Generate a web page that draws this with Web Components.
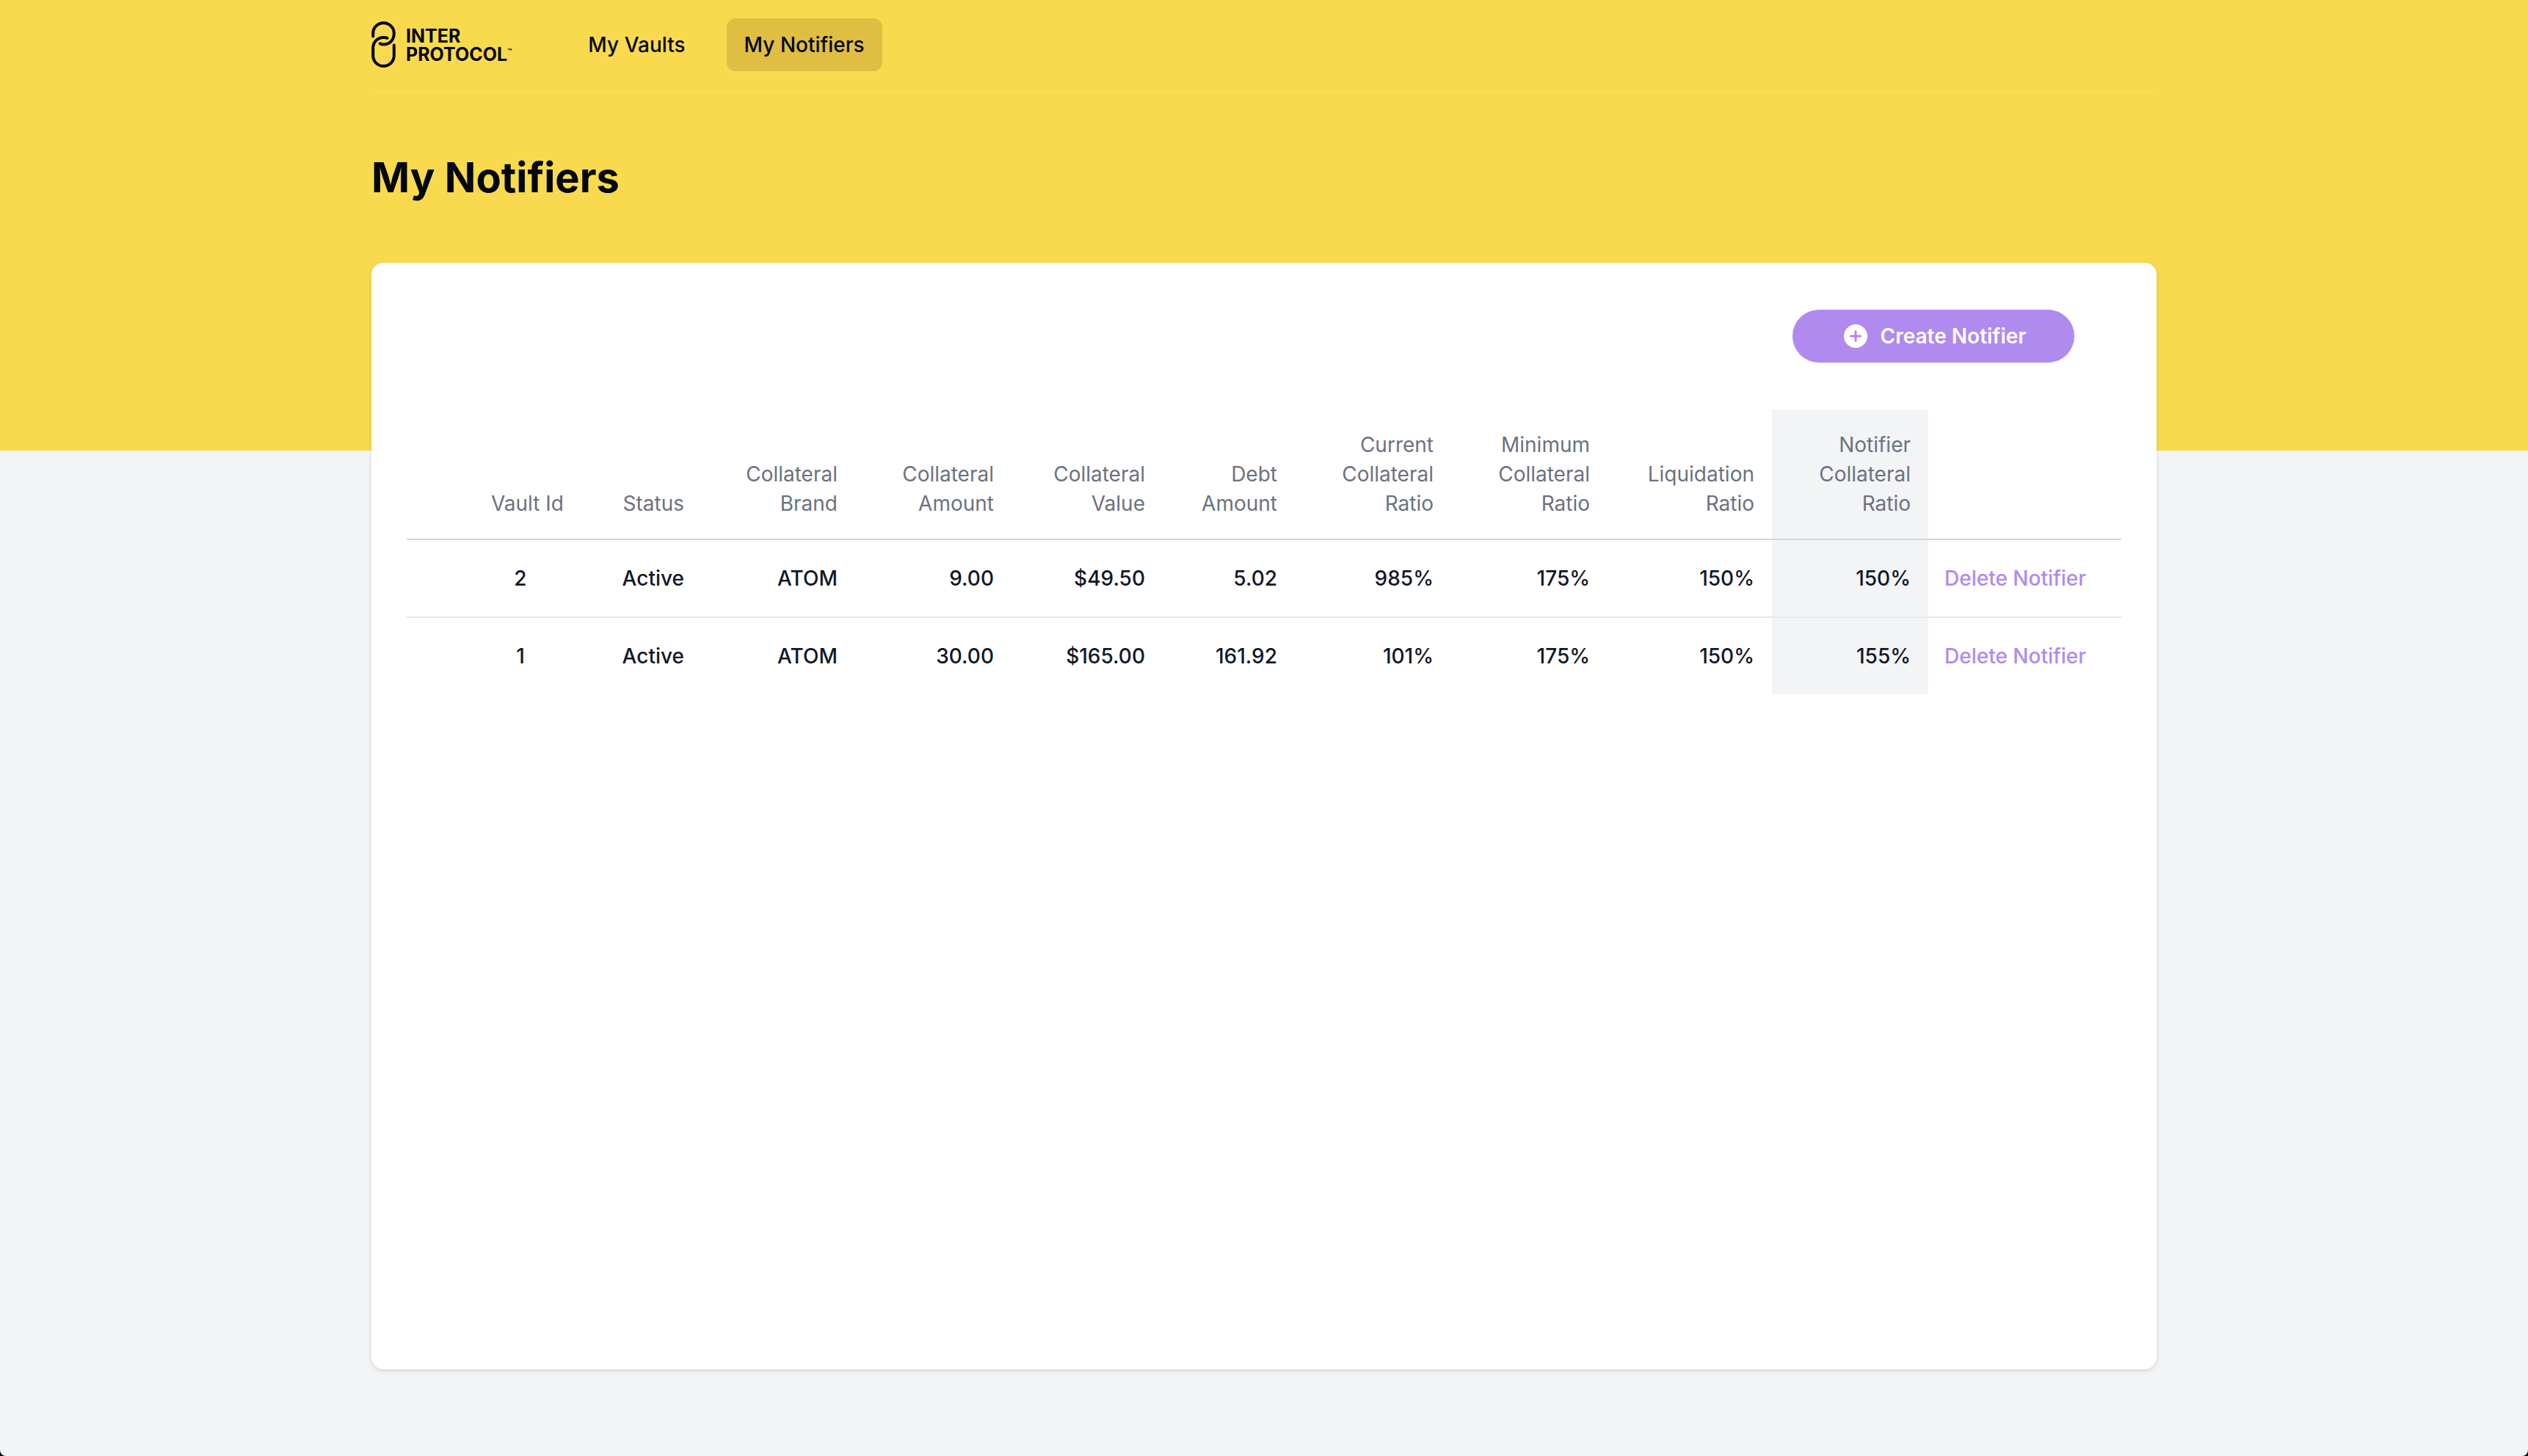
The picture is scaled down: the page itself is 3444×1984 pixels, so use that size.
<!DOCTYPE html>
<html lang="en">
<head>
<meta charset="utf-8">
<title>My Notifiers</title>
<style>
  html { background: #000; }
  body {
    margin: 0;
    font-family: Inter, "Liberation Sans", sans-serif;
    font-size: 28px;
    line-height: 40px;
    color: #111827;
    --yellow: #f9da4e;
    --purple: #b08aee;
    --gutter: 48px;
  }
</style>
</head>
<body>
<app-shell>
  <app-header slot="header">
    <brand-logo slot="logo"></brand-logo>
    <nav-link href="#vaults">My Vaults</nav-link>
    <nav-link href="#notifiers" active>My Notifiers</nav-link>
  </app-header>
  <page-title slot="title">My Notifiers</page-title>
  <content-card>
    <create-button slot="actions">Create Notifier</create-button>
    <notifier-table></notifier-table>
  </content-card>
</app-shell>

<script>
const define = (name, html, setup) => {
  const template = document.createElement('template');
  template.innerHTML = html;
  customElements.define(name, class extends HTMLElement {
    constructor() {
      super();
      this.attachShadow({ mode: 'open' }).append(template.content.cloneNode(true));
    }
    connectedCallback() {
      if (setup) setup(this, this.shadowRoot);
    }
  });
};

define('app-shell', `
  <style>
    :host {
      display: flex; flex-direction: column; min-height: 100vh;
      background: #f3f4f6; border-radius: 0 0 8px 8px; overflow: hidden;
    }
    .hero { background: var(--yellow); padding-bottom: 256px; }
    .wrap { box-sizing: border-box; width: 100%; max-width: 2432px; margin: 0 auto; }
    main { flex: 1; display: flex; margin-top: -256px; padding-bottom: 118px; }
    main .wrap { display: flex; }
    ::slotted(content-card) { flex: 1; }
  </style>
  <div class="hero">
    <div class="wrap"><slot name="header"></slot><slot name="title"></slot></div>
  </div>
  <main><div class="wrap"><slot></slot></div></main>
`);

define('app-header', `
  <style>
    :host { display: block; }
    header {
      display: flex; align-items: center; gap: 80px; height: 122px;
      padding-bottom: 2px; border-bottom: 2px solid #f9dd62;
    }
    nav { display: flex; gap: 32px; }
  </style>
  <header><slot name="logo"></slot><nav aria-label="Main"><slot></slot></nav></header>
`);

define('brand-logo', `
  <style>
    :host { display: block; color: #000; }
    a { display: flex; align-items: center; gap: 14px; color: inherit; text-decoration: none; }
    .name { padding-top: 2px; font-size: 25px; line-height: 25px; font-weight: 700; }
    .row { display: flex; }
    .tm { font-size: 10px; line-height: 16px; font-weight: 500; }
    svg { display: block; }
  </style>
  <a href="#home">
    <svg width="33" height="64" viewBox="0 0 33 64" fill="none" stroke="currentColor" stroke-width="4" stroke-linecap="round" aria-hidden="true">
      <path d="M2.2 20.5V16.5a14.3 14.3 0 0 1 28.6 0c0 9-6 15-14 15-2 0-3.700-.3-5-1.200"/>
      <path d="M21.500 23c-1.500-.8-3-1-5-1-8 0-14.300 6.200-14.300 14.300v10.400a14.300 14.300 0 0 0 28.600 0V32.500"/>
    </svg>
    <span class="name">
      <span class="row">INTER</span>
      <span class="row">PROTOCOL<span class="tm">™</span></span>
    </span>
  </a>
`);

define('nav-link', `
  <style>
    :host { display: block; }
    a {
      display: block; padding: 16px 24px; border-radius: 12px;
      font-weight: 500; color: #030712; text-decoration: none; white-space: nowrap;
    }
    :host([active]) a { background: #e0be41; }
  </style>
  <a><slot></slot></a>
`, (host, root) => {
  const link = root.querySelector('a');
  link.href = host.getAttribute('href');
  if (host.hasAttribute('active')) link.setAttribute('aria-current', 'page');
});

define('page-title', `
  <style>
    :host { display: block; padding: 80px 0; }
    h1 { margin: 0; font-size: 56px; line-height: 72px; font-weight: 700; color: #030712; }
  </style>
  <h1><slot></slot></h1>
`);

define('content-card', `
  <style>
    :host {
      display: block; padding: 64px var(--gutter); background: #fff; border-radius: 16px;
      box-shadow: 0 2px 6px rgba(0,0,0,.1), 0 2px 4px -2px rgba(0,0,0,.1);
    }
    .actions { display: flex; justify-content: flex-end; padding: 0 64px 64px 0; }
  </style>
  <div class="actions"><slot name="actions"></slot></div>
  <slot></slot>
`);

define('create-button', `
  <style>
    :host { display: block; }
    button {
      display: flex; align-items: center; justify-content: center; gap: 14px;
      min-width: 384px; padding: 16px 32px; border: 0; border-radius: 36px;
      background: var(--purple); color: #fff; font: inherit; font-weight: 600;
      box-shadow: 0 2px 4px rgba(0,0,0,.05);
    }
    svg { display: block; }
  </style>
  <button type="button">
    <svg width="40" height="40" viewBox="0 0 20 20" fill="currentColor" aria-hidden="true">
      <path fill-rule="evenodd" d="M10 18a8 8 0 1 0 0-16 8 8 0 0 0 0 16Zm.75-11.250a.75.75 0 0 0-1.500 0v2.500h-2.500a.75.75 0 0 0 0 1.500h2.500v2.500a.75.75 0 0 0 1.500 0v-2.500h2.500a.75.75 0 0 0 0-1.500h-2.500v-2.500Z"/>
    </svg>
    <span><slot></slot></span>
  </button>
`);

const columns = [
  ['Vault Id', 238], ['Status', 164], ['Collateral<br>Brand', 209], ['Collateral<br>Amount', 213],
  ['Collateral<br>Value', 206], ['Debt<br>Amount', 180], ['Current<br>Collateral<br>Ratio', 213],
  ['Minimum<br>Collateral<br>Ratio', 213], ['Liquidation<br>Ratio', 224],
  ['Notifier<br>Collateral<br>Ratio', 213]
];
const vaults = [
  ['2', 'Active', 'ATOM', '9.00', '$49.50', '5.02', '985%', '175%', '150%', '150%'],
  ['1', 'Active', 'ATOM', '30.00', '$165.00', '161.92', '101%', '175%', '150%', '155%']
];

define('notifier-table', `
  <style>
    :host { display: block; }
    table { width: 100%; table-layout: fixed; border-collapse: separate; border-spacing: 0; }
    th, td { text-align: right; white-space: nowrap; }
    th { padding: 28px 24px; vertical-align: bottom; font-weight: 400; color: #6b7280; border-bottom: 2px solid #d1d5db; }
    td { padding: 32px 24px; font-weight: 500; }
    tr + tr td { border-top: 2px solid #e5e7eb; }
    th:first-child, td:first-child { padding-left: 96px; }
    td:first-child { text-align: center; }
    .highlight { background: #f3f4f6; }
    td:last-child { padding-left: 22px; text-align: left; }
    button { display: block; padding: 0; border: 0; background: none; font: inherit; color: var(--purple); }
  </style>
  <table>
    <colgroup>${columns.map(([, w]) => `<col style="width:${w}px">`).join('')}<col style="width:263px"></colgroup>
    <thead><tr>${columns.map(([label], i) => `<th scope="col"${i === 9 ? ' class="highlight"' : ''}>${label}</th>`).join('')}<th aria-label="Actions"></th></tr></thead>
    <tbody>${vaults.map(row => `<tr>${row.map((v, i) => `<td${i === 9 ? ' class="highlight"' : ''}>${v}</td>`).join('')}<td><button type="button">Delete Notifier</button></td></tr>`).join('')}</tbody>
  </table>
`);
</script>
</body>
</html>
